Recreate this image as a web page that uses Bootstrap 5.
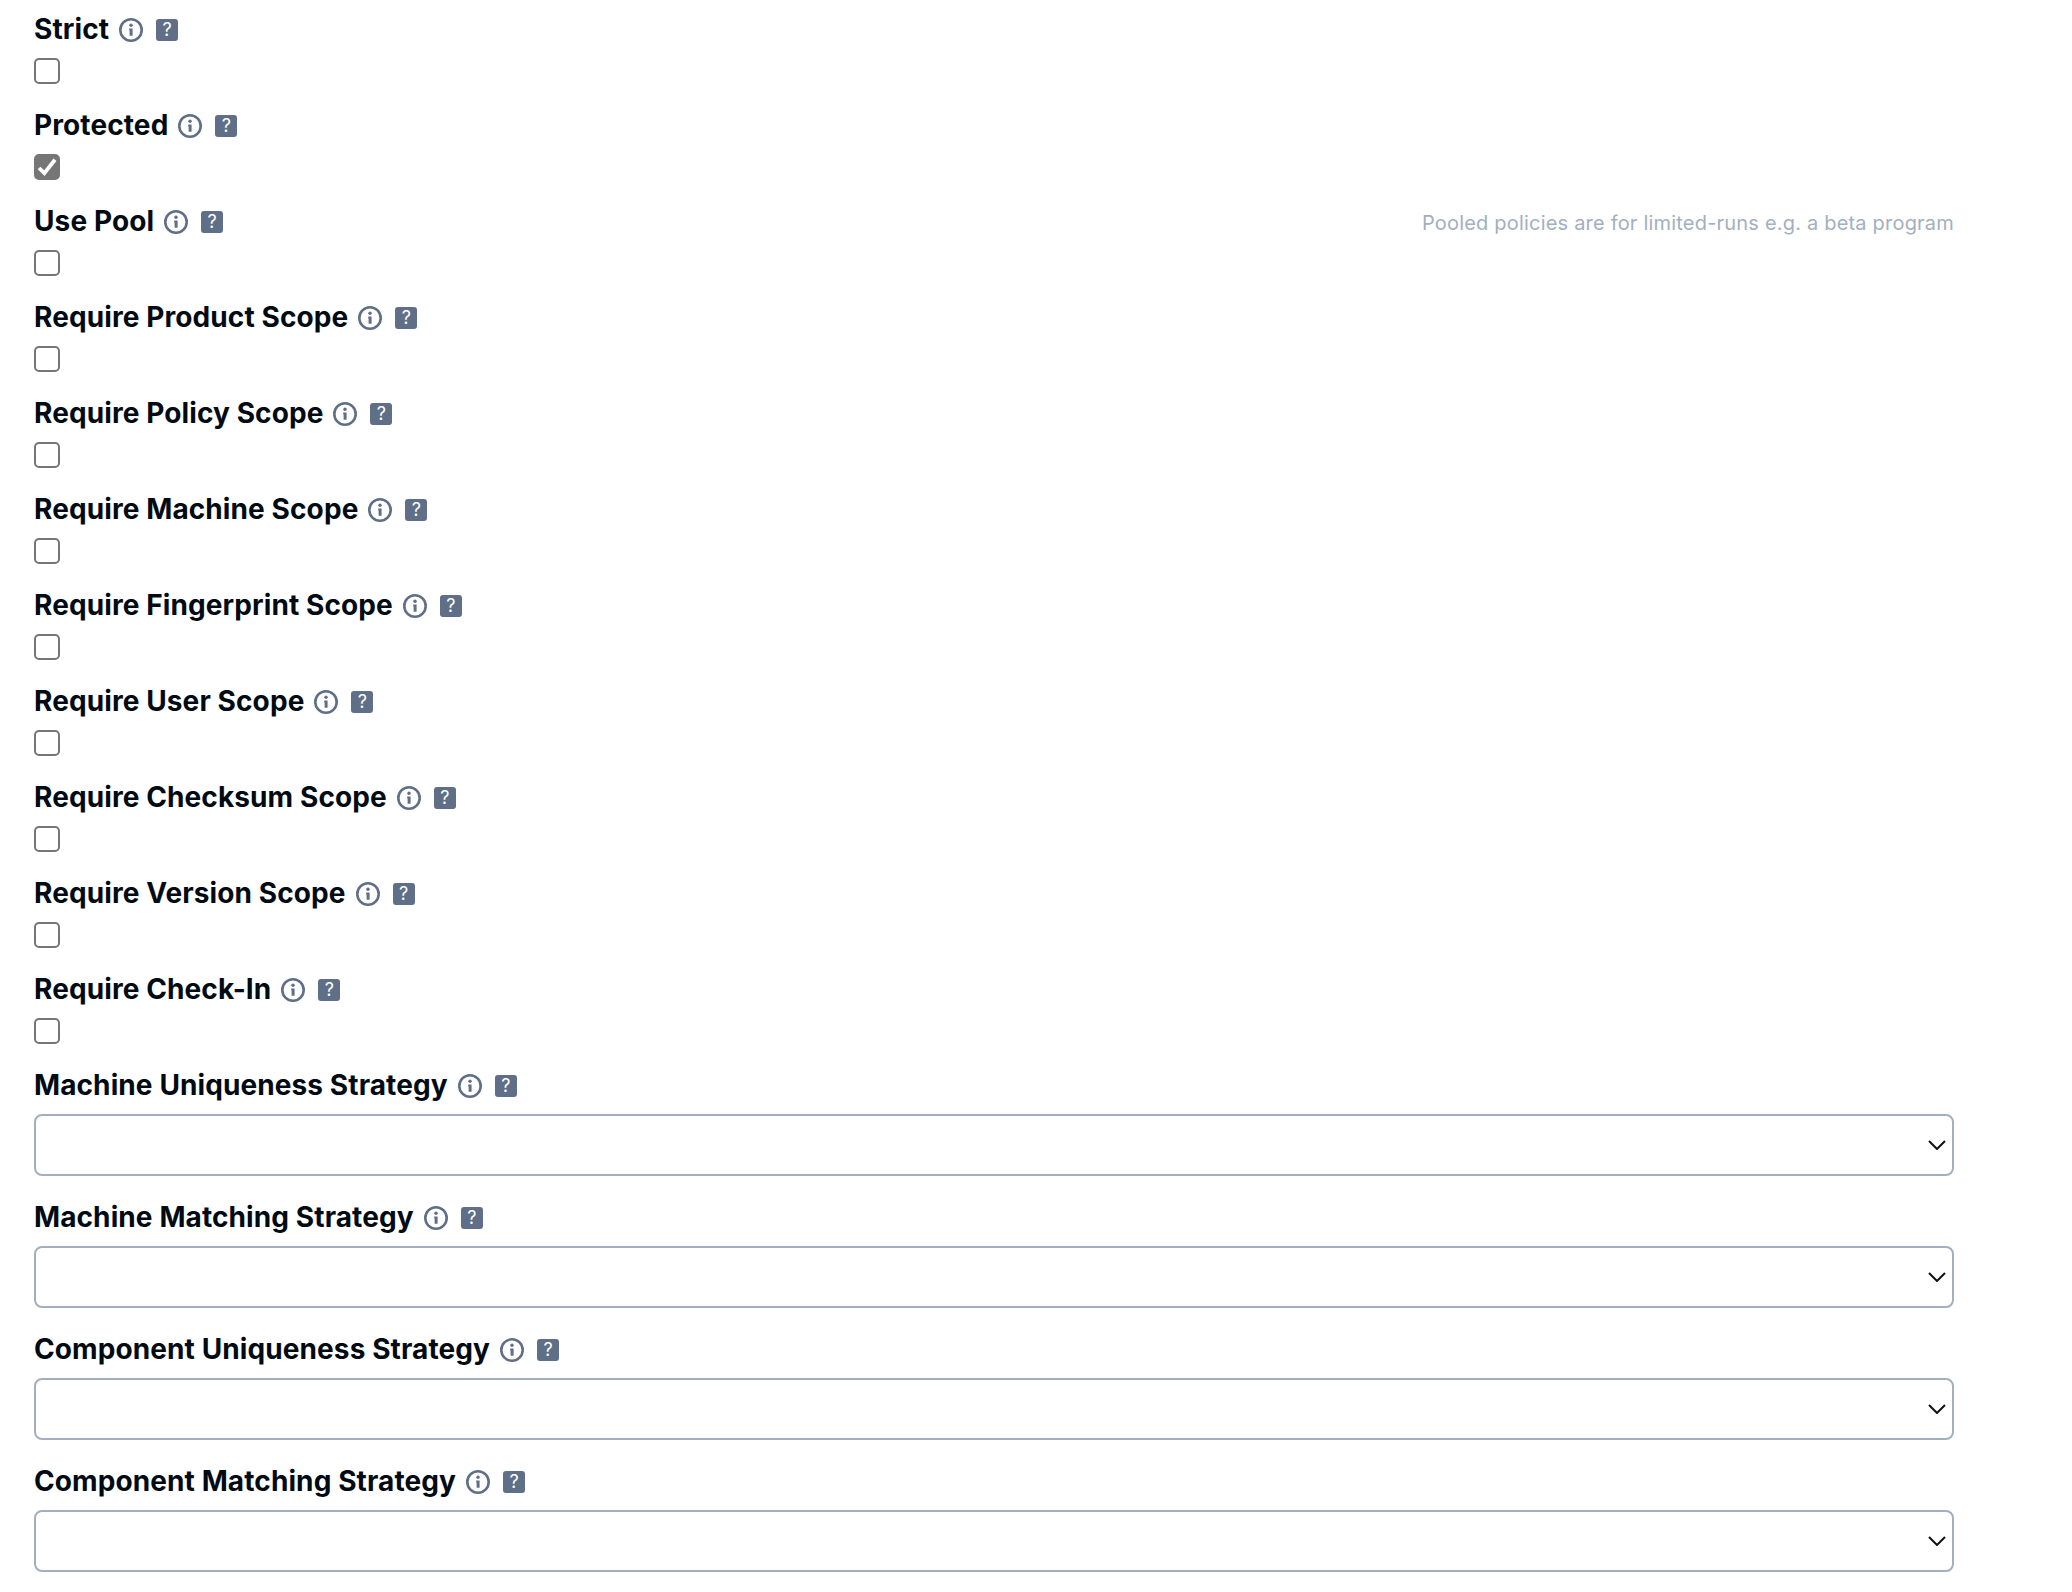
<!DOCTYPE html>
<html lang="en">
<head>
<meta charset="utf-8">
<meta name="viewport" content="width=device-width, initial-scale=1">
<title>Policy</title>
<link href="https://cdn.jsdelivr.net/npm/bootstrap@5.3.0/dist/css/bootstrap.min.css" rel="stylesheet">
<style>
body { font-family: Inter, "Liberation Sans", sans-serif; color: #020b13; background: #fff; }
.policy-form { width: 1954px; padding: 10px 0 0 34px; }
.field { margin-bottom: 22px; }
.field-head { height: 40px; margin-bottom: 8px; }
.field-name { font-size: 28px; font-weight: 700; letter-spacing: .1px; line-height: 38px; padding-bottom: 2px; white-space: nowrap; margin-right: 10px; }
.info-icon { width: 24px; height: 24px; margin-right: 13px; flex: none; }
.help-tag { width: 22px; height: 22px; border-radius: 3px; background: #5f6f88; color: #fff; font-size: 18px; font-weight: 400; line-height: 22px; flex: none; }
.hint { font-size: 20px; line-height: 28px; color: #a3afbf; letter-spacing: .2px; padding-top: 2px; }
.form-check-input.tick { display: block; width: 26px; height: 26px; margin: 0; border: 2px solid #767676; border-radius: 5px; background-color: #fff; }
.form-check-input.tick:checked { background-color: #767676; border-color: #767676; background-size: 22px 22px; background-image: url("data:image/svg+xml,%3Csvg xmlns='http://www.w3.org/2000/svg' viewBox='0 0 22 22'%3E%3Cpath d='M3 12 8.4 17.2 19 3.8' fill='none' stroke='%23fff' stroke-width='3.8'/%3E%3C/svg%3E"); }
.form-select.strategy { height: 62px; border: 2px solid #a3afbf; border-radius: 8px; background-size: 18px 10px; background-position: right 6px center; background-image: url("data:image/svg+xml,%3Csvg xmlns='http://www.w3.org/2000/svg' viewBox='0 0 18 10'%3E%3Cpath d='M1 1 9 9 17 1' fill='none' stroke='%23111' stroke-width='2'/%3E%3C/svg%3E"); }
</style>
<script src="https://cdn.jsdelivr.net/npm/bootstrap@5.3.0/dist/js/bootstrap.bundle.min.js"></script>
</head>
<body>
<form class="policy-form" id="policy"></form>
<template id="head">
  <div class="field-head d-flex align-items-center">
    <label class="field-name"></label>
    <svg class="info-icon" viewBox="0 0 24 24"><circle cx="12" cy="12" r="10.7" fill="none" stroke="#5f6f88" stroke-width="2.6"/><circle cx="12" cy="7.3" r="1.7" fill="#5f6f88"/><path d="M10.2 10.4h3.4v7.4h-3v-5.4h-.4z" fill="#5f6f88"/></svg>
    <span class="help-tag d-flex justify-content-center">?</span>
  </div>
</template>
<script>
const fields = [
  ["Strict", "check"],
  ["Protected", "check", true],
  ["Use Pool", "check", false, "Pooled policies are for limited-runs e.g. a beta program"],
  ["Require Product Scope", "check"],
  ["Require Policy Scope", "check"],
  ["Require Machine Scope", "check"],
  ["Require Fingerprint Scope", "check"],
  ["Require User Scope", "check"],
  ["Require Checksum Scope", "check"],
  ["Require Version Scope", "check"],
  ["Require Check-In", "check"],
  ["Machine Uniqueness Strategy", "select"],
  ["Machine Matching Strategy", "select"],
  ["Component Uniqueness Strategy", "select"],
  ["Component Matching Strategy", "select"]
];
const form = document.getElementById("policy");
fields.forEach(([name, kind, checked, hint], i) => {
  const field = document.createElement("div");
  field.className = "field";
  field.append(document.getElementById("head").content.cloneNode(true));
  const label = field.querySelector("label");
  label.textContent = name;
  label.htmlFor = "f" + i;
  if (hint) {
    const note = document.createElement("span");
    note.className = "hint ms-auto";
    note.textContent = hint;
    field.firstElementChild.append(note);
  }
  const control = document.createElement(kind === "check" ? "input" : "select");
  control.id = "f" + i;
  if (kind === "check") {
    control.type = "checkbox";
    control.className = "form-check-input tick";
    control.checked = !!checked;
  } else {
    control.className = "form-select strategy";
  }
  field.append(control);
  form.append(field);
});
</script>
</body>
</html>
